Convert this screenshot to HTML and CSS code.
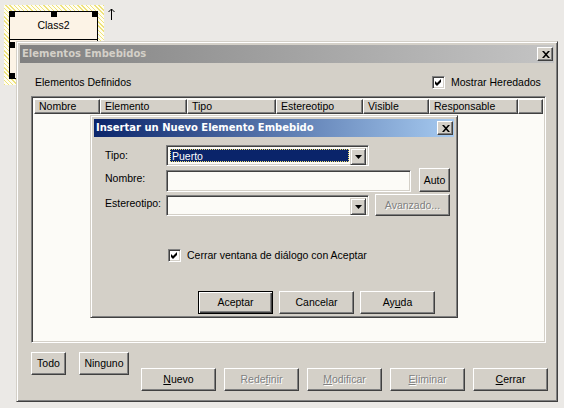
FILE: index.html
```html
<!DOCTYPE html>
<html lang="es">
<head>
<meta charset="utf-8">
<title>Elementos Embebidos</title>
<link rel="stylesheet" href="styles.css">
</head>
<body>
<div class="desk">
  <div class="selection">
    <div class="classbox">
      <div class="classname">Class2</div>
      <div class="classbody"></div>
      <span class="handle h-tl"></span>
      <span class="handle h-tm"></span>
      <span class="handle h-tr"></span>
      <span class="handle h-lm"></span>
      <span class="handle h-bl"></span>
    </div>
  </div>
  <svg class="uparrow" viewBox="0 0 7 12" width="7" height="12"><path d="M3.5 12V1M0.5 4L3.5 1L6.5 4" fill="none" stroke="#000" stroke-width="1"/></svg>

  <div class="win outer">
    <div class="titlebar inactive">
      <span class="title">Elementos Embebidos</span>
      <span class="closebtn"><svg viewBox="0 0 8 7" width="8" height="7"><path d="M0 0H2L4 2.3L6 0H8L5 3.5L8 7H6L4 4.7L2 7H0L3 3.5Z" fill="#000"/></svg></span>
    </div>
    <div class="outer-body">
      <div class="toprow">
        <span class="grow">Elementos Definidos</span>
        <span class="check wide"><span class="cb"><svg viewBox="0 0 7 7" width="7" height="7"><path d="M0 2L2 4L6 0V3L2 7L0 5Z" fill="#000"/></svg></span>Mostrar Heredados</span>
      </div>
      <div class="list">
        <div class="listhead">
          <div class="hc c1">Nombre</div>
          <div class="hc c2">Elemento</div>
          <div class="hc c3">Tipo</div>
          <div class="hc c4">Estereotipo</div>
          <div class="hc c5">Visible</div>
          <div class="hc c6">Responsable</div>
          <div class="hc c7"></div>
        </div>
        <div class="listbody"></div>
      </div>
      <div class="bottom">
        <button class="btn b-todo">Todo</button>
        <button class="btn b-ninguno">Ninguno</button>
        <div class="actions">
          <button class="btn"><u>N</u>uevo</button>
          <button class="btn dis">Rede<u>f</u>inir</button>
          <button class="btn dis"><u>M</u>odificar</button>
          <button class="btn dis"><u>E</u>liminar</button>
          <button class="btn"><u>C</u>errar</button>
        </div>
      </div>
    </div>
  </div>

  <div class="win inner">
    <div class="titlebar active">
      <span class="title">Insertar un Nuevo Elemento Embebido</span>
      <span class="closebtn"><svg viewBox="0 0 8 7" width="8" height="7"><path d="M0 0H2L4 2.3L6 0H8L5 3.5L8 7H6L4 4.7L2 7H0L3 3.5Z" fill="#000"/></svg></span>
    </div>
    <div class="inner-body">
      <div class="frow r1">
        <span class="flabel">Tipo:</span>
        <div class="combo w203">
          <span class="cval sel"><span class="focus">Puerto</span></span>
          <span class="drop"><svg viewBox="0 0 7 4" width="7" height="4"><path d="M0 0H7L3.5 4Z" fill="#000"/></svg></span>
        </div>
      </div>
      <div class="frow r2">
        <span class="flabel l2">Nombre:</span>
        <div class="field w245"></div>
        <button class="btn b-auto">Auto</button>
      </div>
      <div class="frow r3">
        <span class="flabel l3">Estereotipo:</span>
        <div class="combo w203 c2top">
          <span class="cval"></span>
          <span class="drop"><svg viewBox="0 0 7 4" width="7" height="4"><path d="M0 0H7L3.5 4Z" fill="#000"/></svg></span>
        </div>
        <button class="btn dis b-avz">Avanzado...</button>
      </div>
      <div class="check closecheck"><span class="cb"><svg viewBox="0 0 7 7" width="7" height="7"><path d="M0 2L2 4L6 0V3L2 7L0 5Z" fill="#000"/></svg></span>Cerrar ventana de diálogo con Aceptar</div>
      <div class="dlgbtns">
        <button class="btn def">Aceptar</button>
        <button class="btn">Cancelar</button>
        <button class="btn">Ay<u>u</u>da</button>
      </div>
    </div>
  </div>
</div>
</body>
</html>
```

FILE: styles.css
```css
* { box-sizing: border-box; }
html, body { margin: 0; height: 100%; }
body {
  background: #ebe9e6;
  font-family: "Liberation Sans", Arial, sans-serif;
  font-size: 10.5px;
  line-height: 13px;
  color: #000;
  overflow: hidden;
}
.desk { position: relative; width: 564px; height: 408px; }

/* diagram element */
.selection {
  position: absolute; left: 4px; top: 5px; width: 100px; height: 80px;
  padding: 6px 6px 6px 5px;
  background: repeating-linear-gradient(45deg, #eee27c 0 1px, #fffdf0 1px 3px);
}
.classbox {
  position: relative; height: 100%;
  background: #fcf3e6; border: 1px solid #000;
  display: flex; flex-direction: column;
}
.classname {
  height: 28px; border-bottom: 1px solid #000;
  display: flex; align-items: center; justify-content: center;
  font-size: 10.5px;
}
.classbody { flex: 1; }
.handle { position: absolute; width: 6px; height: 6px; background: #000; }
.h-tl { left: -1px; top: -1px; }
.h-tm { left: 41px; top: -1px; }
.h-tr { right: -1px; top: -1px; }
.h-lm { left: -1px; top: 30px; }
.h-bl { left: -1px; bottom: -1px; }
.uparrow { position: absolute; left: 108px; top: 8px; }

/* windows */
.win {
  position: absolute;
  background: #d4d0c8;
  border: 1px solid; border-color: #d4d0c8 #404040 #404040 #d4d0c8;
  box-shadow: inset 1px 1px #fff, inset -1px -1px #808080;
  padding: 3px;
  display: flex; flex-direction: column;
}
.outer { left: 16px; top: 41px; width: 542px; height: 361px; }
.inner { left: 90px; top: 115px; width: 368px; height: 203px; }

.titlebar {
  height: 18px; flex: none;
  display: flex; align-items: center;
  padding: 0 1px 0 2px;
}
.inactive { background: linear-gradient(90deg, #808080, #c4c4c4); color: #d4d0c8; }
.active { background: linear-gradient(90deg, #0a246a, #a6caf0); color: #fff; }
.title {
  flex: 1;
  font-family: "DejaVu Sans", Verdana, sans-serif;
  font-weight: bold; font-size: 10px; line-height: 12px;
  white-space: nowrap;
}
.closebtn {
  width: 16px; height: 14px; flex: none;
  background: #d4d0c8;
  border: 1px solid; border-color: #fff #404040 #404040 #fff;
  box-shadow: inset -1px -1px #808080;
  display: flex; align-items: center; justify-content: center;
  padding-left: 1px;
}

/* buttons */
.btn {
  font: inherit; color: #000; margin: 0; padding: 0;
  height: 23px; width: 75px; flex: none;
  background: #d4d0c8;
  border: 1px solid; border-color: #fff #404040 #404040 #fff;
  box-shadow: inset -1px -1px #808080, inset 1px 1px #d4d0c8;
  display: flex; align-items: center; justify-content: center;
  white-space: nowrap;
}
.btn.dis { color: #808080; text-shadow: 1px 1px 0 #fff; }
.btn.def {
  border: 1px solid #000;
  box-shadow: inset 1px 1px #fff, inset -1px -1px #404040, inset -2px -2px #808080;
}

/* checkbox */
.check { display: flex; align-items: center; white-space: nowrap; }
.cb {
  width: 13px; height: 13px; flex: none; margin-right: 6px;
  background: #fff;
  border: 1px solid; border-color: #808080 #fff #fff #808080;
  box-shadow: inset 1px 1px #404040, inset -1px -1px #d4d0c8;
  display: flex; align-items: center; justify-content: center;
}

/* outer body */
.outer-body {
  flex: 1; min-height: 0;
  display: flex; flex-direction: column;
  padding: 12px 8px 7px 11px;
}
.toprow { height: 14px; display: flex; align-items: center; margin-bottom: 7px; padding-left: 4px; }
.grow { flex: 1; }
.wide { width: 114px; }
.list {
  flex: 1; min-height: 0;
  display: flex; flex-direction: column;
  border: 1px solid; border-color: #808080 #fff #fff #808080;
  box-shadow: inset 1px 1px #404040, inset -1px -1px #d4d0c8;
  padding: 2px 2px 2px 2px;
  background: #fcfbf7;
}
.listhead { display: flex; height: 15px; flex: none; background: #d4d0c8; }
.hc {
  height: 15px; flex: none;
  border: 1px solid; border-color: #fff #404040 #404040 #fff;
  box-shadow: inset -1px -1px #808080;
  padding-left: 4px;
  line-height: 12px; white-space: nowrap; overflow: hidden;
}
.c1 { width: 66px; }
.c2 { width: 87px; }
.c3 { width: 89px; }
.c4 { width: 87px; }
.c5 { width: 66px; }
.c6 { width: 89px; }
.c7 { flex: 1; }
.listbody { flex: 1; background: #fcfbf7; }

.bottom { display: flex; align-items: flex-start; margin-top: 9px; height: 39px; flex: none; }
.b-todo { width: 35px; }
.b-ninguno { width: 50px; margin-left: 13px; }
.actions { display: flex; gap: 8px; margin-left: 12px; margin-top: 16px; }

/* inner body */
.inner-body { flex: 1; padding: 8px 4px 0 11px; display: flex; flex-direction: column; }
.frow { display: flex; align-items: flex-start; }
.flabel { width: 61px; flex: none; }
.r1 { height: 21px; align-items: center; }
.r2 { height: 24px; margin-top: 2px; }
.r3 { height: 22px; margin-top: 2px; }
.l2 { margin-top: 4px; }
.l3 { margin-top: 3px; }

.field, .combo {
  height: 21px; flex: none;
  background: #fcfbf7;
  border: 1px solid; border-color: #808080 #fff #fff #808080;
  box-shadow: inset 1px 1px #404040, inset -1px -1px #d4d0c8;
}
.field { height: 22px; margin-top: 2px; }
.w203 { width: 203px; }
.w245 { width: 245px; }
.combo { display: flex; padding: 2px; }
.c2top { margin-top: 1px; }
.cval { flex: 1; display: flex; padding: 1px 1px 1px 1px; }
.cval.sel .focus {
  flex: 1; background: #0a246a; color: #fff;
  outline: 1px dotted #f0e070; outline-offset: -1px;
  padding-left: 2px; line-height: 15px;
}
.drop {
  width: 16px; height: 17px; flex: none;
  background: #d4d0c8;
  border: 1px solid; border-color: #d4d0c8 #404040 #404040 #d4d0c8;
  box-shadow: inset 1px 1px #fff, inset -1px -1px #808080;
  display: flex; align-items: center; justify-content: center;
}
.b-auto { width: 31px; height: 24px; margin-left: 8px; }
.b-avz { width: 75px; height: 22px; margin-left: 6px; }

.closecheck { margin-top: 33px; margin-left: 63px; height: 13px; }
.dlgbtns { display: flex; justify-content: flex-end; gap: 6px; margin-top: 29px; padding-right: 15px; }
```
